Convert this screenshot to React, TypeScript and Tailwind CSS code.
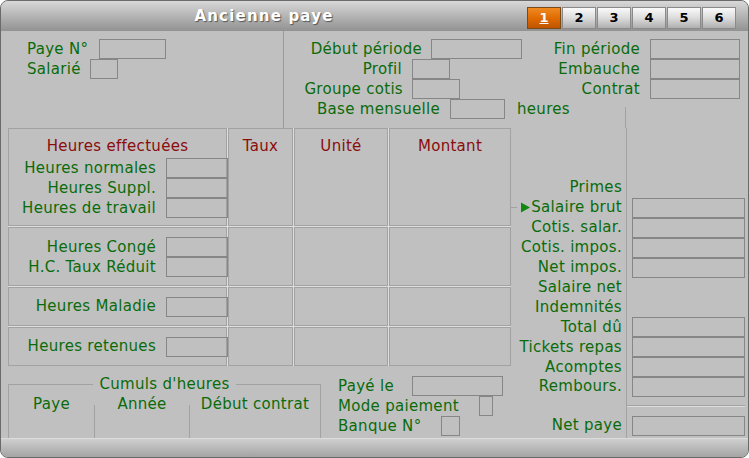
function Field({ className = "" }: { className?: string }) {
  return <div className={`h-[20px] shrink-0 border border-[#868686] ${className}`} />;
}

const tabs = ["1", "2", "3", "4", "5", "6"];

export default function App() {
  return (
    <div className="h-[458px] w-[749px] bg-white font-['DejaVu_Sans',sans-serif] text-[15px] tracking-[0.3px] text-[#0a6b0a]">
      <div className="flex h-full w-full flex-col overflow-hidden rounded-[8px] border border-[#6a6a6a] bg-[#c0c0c0]">
        {/* Title bar */}
        <div className="flex h-[30px] shrink-0 bg-gradient-to-b from-[#d8d8d8] to-[#929292]">
          <div className="flex-1 pt-[5px] text-center text-[15px] font-bold leading-[20px] tracking-[1.2px] text-white [text-shadow:1px_1px_1px_#555]">
            Ancienne paye
          </div>
          <div className="mr-[12px] mt-[6px] flex gap-px">
            {tabs.map((t, i) => (
              <div
                key={t}
                className={
                  i === 0
                    ? "flex h-[22px] w-[34px] items-center justify-center border border-[#7a4a1a] bg-gradient-to-b from-[#f08a20] via-[#e06c00] to-[#c05400] text-[13px] font-bold tracking-normal text-white underline"
                    : "flex h-[22px] w-[34px] items-center justify-center border border-[#8a8a8a] bg-gradient-to-b from-[#fafafa] via-[#dcdcdc] to-[#b0b0b0] text-[13px] font-bold tracking-normal text-black"
                }
              >
                {t}
              </div>
            ))}
          </div>
        </div>

        {/* Top section */}
        <div className="flex h-[97px] shrink-0">
          <div className="w-[283px] shrink-0 border-r border-[#9c9c9c] pl-[26px] pt-[8px]">
            <div className="flex h-[20px] items-center">
              <span className="w-[72px]">Paye N°</span>
              <Field className="w-[67px]" />
            </div>
            <div className="flex h-[20px] items-center">
              <span className="w-[63px]">Salarié</span>
              <Field className="w-[28px]" />
            </div>
          </div>
          <div className="flex flex-1 flex-col pt-[8px]">
            <div className="flex h-[20px] items-center">
              <span className="w-[138px] text-right">Début période</span>
              <Field className="ml-[9px] w-[91px]" />
              <span className="w-[118px] text-right">Fin période</span>
              <Field className="ml-[10px] w-[90px]" />
            </div>
            <div className="flex h-[20px] items-center">
              <span className="w-[118px] text-right">Profil</span>
              <Field className="ml-[10px] w-[38px]" />
              <span className="w-[190px] text-right">Embauche</span>
              <Field className="ml-[10px] w-[90px]" />
            </div>
            <div className="flex h-[20px] items-center">
              <span className="w-[119px] text-right">Groupe cotis</span>
              <Field className="ml-[9px] w-[48px]" />
              <span className="w-[180px] text-right">Contrat</span>
              <Field className="ml-[10px] w-[90px]" />
            </div>
            <div className="flex h-[29px] items-start">
              <span className="w-[156px] text-right leading-[20px]">Base mensuelle</span>
              <Field className="ml-[10px] w-[55px]" />
              <span className="ml-[12px] leading-[20px]">heures</span>
              <div className="ml-auto mr-[122px] mt-[8px] h-[21px] w-px bg-[#a2a2a2]" />
            </div>
          </div>
        </div>

        {/* Lower section */}
        <div className="flex h-[310px] shrink-0">
          <div className="flex w-[510px] shrink-0 flex-col pl-[7px]">
            {/* Hours table */}
            <div className="grid h-[238px] w-[503px] grid-cols-[219px_65px_94px_122px] grid-rows-[98px_59px_39px_39px] gap-px bg-[#dedede]">
              <div className="flex flex-col border border-[#a2a2a2] bg-[#c0c0c0] pt-[9px]">
                <div className="text-center leading-[17px] text-[#8a0c0c]">Heures effectuées</div>
                <div className="mt-[3px] flex h-[20px] items-center justify-end">
                  <span>Heures normales</span>
                  <Field className="-mr-[2px] ml-[10px] w-[62px]" />
                </div>
                <div className="flex h-[20px] items-center justify-end">
                  <span>Heures Suppl.</span>
                  <Field className="-mr-[2px] ml-[10px] w-[62px]" />
                </div>
                <div className="flex h-[20px] items-center justify-end">
                  <span>Heures de travail</span>
                  <Field className="-mr-[2px] ml-[10px] w-[62px]" />
                </div>
              </div>
              <div className="border border-[#a2a2a2] bg-[#c0c0c0] pt-[9px] text-center leading-[17px] text-[#8a0c0c]">Taux</div>
              <div className="border border-[#a2a2a2] bg-[#c0c0c0] pt-[9px] text-center leading-[17px] text-[#8a0c0c]">Unité</div>
              <div className="border border-[#a2a2a2] bg-[#c0c0c0] pt-[9px] text-center leading-[17px] text-[#8a0c0c]">Montant</div>

              <div className="flex flex-col border border-[#a2a2a2] bg-[#c0c0c0] pt-[9px]">
                <div className="flex h-[20px] items-center justify-end">
                  <span>Heures Congé</span>
                  <Field className="-mr-[2px] ml-[10px] w-[62px]" />
                </div>
                <div className="flex h-[20px] items-center justify-end">
                  <span>H.C. Taux Réduit</span>
                  <Field className="-mr-[2px] ml-[10px] w-[62px]" />
                </div>
              </div>
              <div className="border border-[#a2a2a2] bg-[#c0c0c0]" />
              <div className="border border-[#a2a2a2] bg-[#c0c0c0]" />
              <div className="border border-[#a2a2a2] bg-[#c0c0c0]" />

              <div className="flex items-center justify-end border border-[#a2a2a2] bg-[#c0c0c0]">
                <span>Heures Maladie</span>
                <Field className="-mr-[2px] ml-[10px] w-[62px]" />
              </div>
              <div className="border border-[#a2a2a2] bg-[#c0c0c0]" />
              <div className="border border-[#a2a2a2] bg-[#c0c0c0]" />
              <div className="border border-[#a2a2a2] bg-[#c0c0c0]" />

              <div className="flex items-center justify-end border border-[#a2a2a2] bg-[#c0c0c0]">
                <span>Heures retenues</span>
                <Field className="-mr-[2px] ml-[10px] w-[62px]" />
              </div>
              <div className="border border-[#a2a2a2] bg-[#c0c0c0]" />
              <div className="border border-[#a2a2a2] bg-[#c0c0c0]" />
              <div className="border border-[#a2a2a2] bg-[#c0c0c0]" />
            </div>

            {/* Bottom: cumuls + payment */}
            <div className="mt-[10px] flex">
              <fieldset className="h-[62px] w-[313px] border border-b-0 border-[#a2a2a2]">
                <legend className="mx-auto px-[6px] leading-[17px]">Cumuls d'heures</legend>
                <div className="flex h-full">
                  <div className="w-[85px] pt-[3px] text-center leading-[17px]">Paye</div>
                  <div className="mt-[12px] w-px bg-[#a2a2a2]" />
                  <div className="w-[94px] pt-[3px] text-center leading-[17px]">Année</div>
                  <div className="mt-[12px] w-px bg-[#a2a2a2]" />
                  <div className="flex-1 pt-[3px] text-center leading-[17px]">Début contrat</div>
                </div>
              </fieldset>
              <div className="ml-[17px] flex flex-col">
                <div className="flex h-[20px] items-center">
                  <span className="w-[74px]">Payé le</span>
                  <Field className="w-[91px]" />
                </div>
                <div className="flex h-[20px] items-center">
                  <span className="w-[141px]">Mode paiement</span>
                  <Field className="w-[14px]" />
                </div>
                <div className="flex h-[20px] items-center">
                  <span className="w-[103px]">Banque N°</span>
                  <Field className="w-[19px]" />
                </div>
              </div>
            </div>
          </div>

          {/* Totals labels */}
          <div className="flex w-[115px] shrink-0 flex-col pr-[4px] pt-[49px] text-right leading-[20px]">
            <div className="h-[20px]">Primes</div>
            <div className="flex h-[20px] items-center">
              <div className="h-px w-[6px] bg-[#a2a2a2]" />
              <div className="flex flex-1 items-center justify-end">
                <svg width="9" height="11" viewBox="0 0 9 11" className="mr-px">
                  <path d="M0 0.5 L9 5.5 L0 10.5 Z" fill="#118811" />
                </svg>
                <span>Salaire brut</span>
              </div>
            </div>
            <div className="h-[20px]">Cotis. salar.</div>
            <div className="h-[20px]">Cotis. impos.</div>
            <div className="h-[20px]">Net impos.</div>
            <div className="h-[20px]">Salaire net</div>
            <div className="h-[20px]">Indemnités</div>
            <div className="h-[20px]">Total dû</div>
            <div className="h-[20px] whitespace-nowrap">Tickets repas</div>
            <div className="h-[20px]">Acomptes</div>
            <div className="h-[18px] leading-[18px]">Rembours.</div>
            <div className="mt-[20px] h-[20px]">Net paye</div>
          </div>

          {/* Totals fields */}
          <div className="flex flex-1 flex-col border-l border-[#a2a2a2] pl-[5px] pt-[70px]">
            <Field className="w-[113px]" />
            <Field className="w-[113px]" />
            <Field className="w-[113px]" />
            <Field className="w-[113px]" />
            <Field className="mt-[39px] w-[113px]" />
            <Field className="w-[113px]" />
            <Field className="w-[113px]" />
            <Field className="w-[113px]" />
            <div className="-ml-[5px] mr-[3px] mt-[8px] h-[2px] border-t border-[#a2a2a2] border-b-[#dedede] border-b" />
            <Field className="mt-[9px] w-[113px]" />
          </div>
        </div>

        {/* Bottom bar */}
        <div className="flex-1 border-t border-[#dcdcdc] bg-gradient-to-b from-[#cfcfcf] to-[#a4a4a4]" />
      </div>
    </div>
  );
}
